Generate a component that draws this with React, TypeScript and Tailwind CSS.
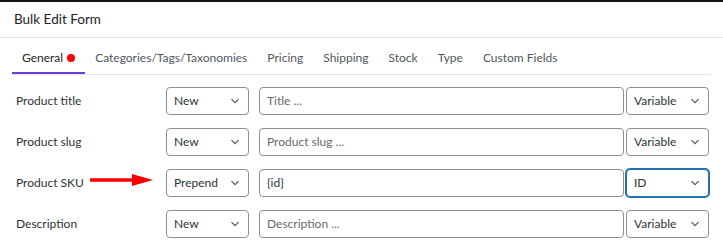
import * as React from "react";

type Row = {
  label: string;
  mode: string;
  value?: string;
  placeholder?: string;
  kind: string;
  focused?: boolean;
  arrow?: boolean;
};

const tabs = [
  "General",
  "Categories/Tags/Taxonomies",
  "Pricing",
  "Shipping",
  "Stock",
  "Type",
  "Custom Fields",
];

const rows: Row[] = [
  { label: "Product title", mode: "New", placeholder: "Title ...", kind: "Variable" },
  { label: "Product slug", mode: "New", placeholder: "Product slug ...", kind: "Variable" },
  { label: "Product SKU", mode: "Prepend", value: "{id}", kind: "ID", focused: true, arrow: true },
  { label: "Description", mode: "New", placeholder: "Description ...", kind: "Variable" },
];

function Chevron() {
  return (
    <svg width="10" height="6" viewBox="0 0 10 6" className="shrink-0">
      <path d="M1.5 1.2l3.5 3.5 3.5-3.5" fill="none" stroke="#50575e" strokeWidth="1.2" />
    </svg>
  );
}

function Select({ value, focused }: { value: string; focused?: boolean }) {
  return (
    <div
      className={
        focused
          ? "w-[83px] h-[28px] shrink-0 flex items-center justify-between pl-[7px] pr-[8px] rounded-[4px] border border-[#2271b1] shadow-[0_0_0_1px_#2271b1] bg-white text-[#2c3338]"
          : "w-[83px] h-[28px] shrink-0 flex items-center justify-between pl-[7px] pr-[8px] rounded-[4px] border border-[#8c8f94] bg-white text-[#2c3338]"
      }
    >
      <span>{value}</span>
      <Chevron />
    </div>
  );
}

function Arrow() {
  return (
    <svg width="64" height="14" viewBox="0 0 64 14" className="absolute left-[74px] top-[-1px]">
      <line x1="1" y1="7" x2="46" y2="7" stroke="#f00" strokeWidth="3.5" strokeLinecap="round" />
      <polygon points="42,1 63,7 42,13" fill="#f00" />
    </svg>
  );
}

function App() {
  return (
    <div className="w-[723px] h-[241px] bg-white overflow-hidden font-['Lato','Noto_Sans',sans-serif] text-[12px]">
      <div className="h-[2px] bg-[#111]" />
      <div className="h-[36px] flex items-center px-[14px] text-[13.5px] text-[#1d2327] border-b border-[#e2e4e7]">
        Bulk Edit Form
      </div>
      <div className="mx-[12px] mt-[11px] flex border-b border-[#e2e4e7]">
        {tabs.map((t, i) => (
          <div
            key={t}
            className={
              i === 0
                ? "px-[10px] pb-[5px] flex items-center gap-[4px] text-[#1d2327] border-b-2 border-[#6741d9]"
                : "px-[10px] pb-[7px] text-[#50575e]"
            }
          >
            {t}
            {i === 0 && <span className="w-[8px] h-[8px] rounded-full bg-[#f00] inline-block" />}
          </div>
        ))}
      </div>
      <div className="mt-[12px] flex flex-col gap-[13px] pl-[16px]">
        {rows.map((r) => (
          <div key={r.label} className="flex items-center h-[28px]">
            <div className="w-[150px] shrink-0 relative text-[#2c3338]">
              {r.label}
              {r.arrow && <Arrow />}
            </div>
            <Select value={r.mode} />
            <div className="ml-[10px] w-[365px] shrink-0 h-[28px] flex items-center px-[7px] rounded-[4px] border border-[#8c8f94] bg-white">
              {r.value ? (
                <span className="text-[#2c3338]">{r.value}</span>
              ) : (
                <span className="text-[#646970]">{r.placeholder}</span>
              )}
            </div>
            <div className="ml-[2px] shrink-0">
              <Select value={r.kind} focused={r.focused} />
            </div>
          </div>
        ))}
      </div>
    </div>
  );
}

export default App;
